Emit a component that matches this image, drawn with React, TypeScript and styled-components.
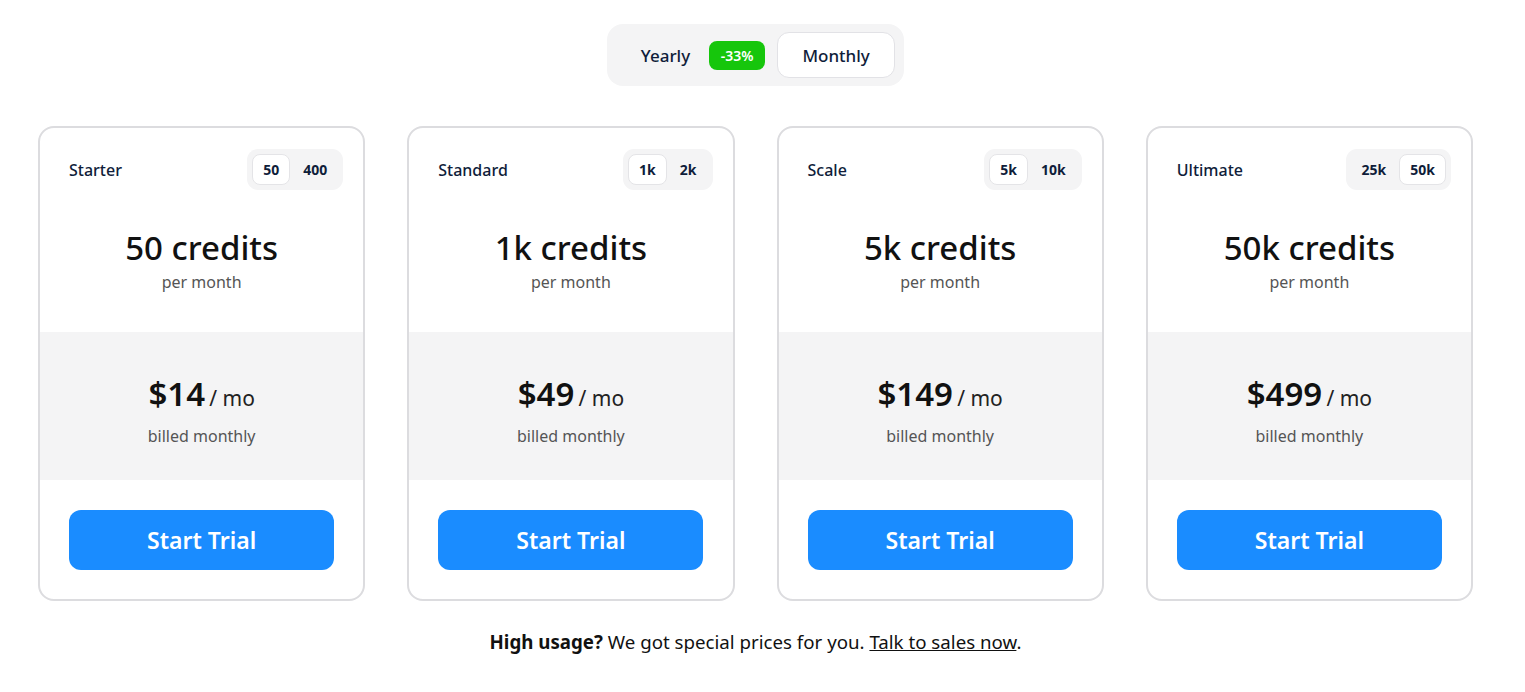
import styled, { createGlobalStyle } from "styled-components"

const Global = createGlobalStyle`
    * { box-sizing: border-box; }
    body {
        margin: 0;
        background: #fff;
        font-family: "Noto Sans", "Open Sans", sans-serif;
        color: #111;
    }
`
const Page = styled.div`
    width: 1435px;
    margin-left: 38px;
    padding-top: 24px;
    display: flex;
    flex-direction: column;
    align-items: center;
`
const Toggle = styled.div`
    display: flex;
    align-items: center;
    height: 62px;
    padding: 0 9px 0 34px;
    background: #f4f4f5;
    border-radius: 16px;
`
const ToggleLabel = styled.span`
    font-size: 17px;
    font-weight: 500;
    color: #0f1d3a;
`
const Badge = styled.span`
    margin-left: 19px;
    background: #16c60c;
    color: #fff;
    font-size: 14px;
    font-weight: 600;
    height: 29px;
    width: 56px;
    border-radius: 8px;
    display: flex;
    align-items: center;
    justify-content: center;
`
const ToggleButton = styled.button`
    margin-left: 12px;
    height: 46px;
    width: 118px;
    background: #fff;
    border: 1px solid #e2e2e6;
    border-radius: 12px;
    font-family: inherit;
    font-size: 17px;
    font-weight: 500;
    color: #0f1d3a;
`
const Cards = styled.div`
    margin-top: 40px;
    width: 100%;
    display: grid;
    grid-template-columns: repeat(4, 1fr);
    gap: 42px;
`
const Card = styled.div`
    height: 475px;
    border: 2px solid #dcdcdf;
    border-radius: 16px;
    overflow: hidden;
    display: flex;
    flex-direction: column;
`
const CardHead = styled.div`
    flex: none;
    display: flex;
    align-items: center;
    justify-content: space-between;
    padding: 21px 20px 0 29px;
`
const PlanName = styled.span`
    font-size: 16px;
    font-weight: 500;
    color: #0f1d3a;
`
const Pill = styled.div`
    display: flex;
    align-items: center;
    gap: 2px;
    height: 41px;
    padding: 0 5px;
    background: #f4f4f5;
    border-radius: 11px;
`
const PillOption = styled.span<{ active?: boolean }>`
    height: 31px;
    padding: 0 10px;
    display: flex;
    align-items: center;
    font-size: 14px;
    font-weight: 700;
    color: #0f1d3a;
    border-radius: 8px;
    background: ${({ active }) => (active ? "#fff" : "transparent")};
    border: 1px solid ${({ active }) => (active ? "#e4e4e7" : "transparent")};
`
const Credits = styled.div`
    flex: none;
    padding-top: 38px;
    height: 142px;
    text-align: center;
`
const Big = styled.div`
    font-size: 33px;
    font-weight: 500;
    line-height: 40px;
    color: #111;
`
const Sub = styled.div`
    font-size: 16px;
    color: #555;
    line-height: 26px;
    margin-top: 1px;
`
const PriceBox = styled.div`
    flex: none;
    height: 148px;
    background: #f4f4f5;
    padding-top: 40px;
    text-align: center;
`
const Price = styled.div`
    line-height: 44px;
`
const Amount = styled.span`
    font-size: 33px;
    font-weight: 600;
    color: #111;
`
const Per = styled.span`
    font-size: 21px;
    color: #222;
`
const Footer = styled.div`
    display: flex;
    justify-content: center;
    padding: 30px 0 0;
`
const TrialButton = styled.button`
    width: 265px;
    height: 60px;
    border: none;
    border-radius: 12px;
    background: #1a8cff;
    color: #fff;
    font-family: inherit;
    font-size: 23px;
    font-weight: 600;
`
const Note = styled.p`
    margin: 28px 0 0;
    font-size: 18.7px;
    color: #111;
    a {
        color: #111;
        text-decoration: underline;
    }
`

const plans = [
    { name: "Starter", options: ["50", "400"], active: 0, credits: "50", price: "$14" },
    { name: "Standard", options: ["1k", "2k"], active: 0, credits: "1k", price: "$49" },
    { name: "Scale", options: ["5k", "10k"], active: 0, credits: "5k", price: "$149" },
    { name: "Ultimate", options: ["25k", "50k"], active: 1, credits: "50k", price: "$499" },
]

function App() {
    return (
        <>
            <Global />
            <Page>
                <Toggle>
                    <ToggleLabel>Yearly</ToggleLabel>
                    <Badge>-33%</Badge>
                    <ToggleButton>Monthly</ToggleButton>
                </Toggle>
                <Cards>
                    {plans.map((p) => (
                        <Card key={p.name}>
                            <CardHead>
                                <PlanName>{p.name}</PlanName>
                                <Pill>
                                    {p.options.map((o, i) => (
                                        <PillOption key={o} active={i === p.active}>{o}</PillOption>
                                    ))}
                                </Pill>
                            </CardHead>
                            <Credits>
                                <Big>{p.credits} credits</Big>
                                <Sub>per month</Sub>
                            </Credits>
                            <PriceBox>
                                <Price>
                                    <Amount>{p.price}</Amount> <Per>/ mo</Per>
                                </Price>
                                <Sub>billed monthly</Sub>
                            </PriceBox>
                            <Footer>
                                <TrialButton>Start Trial</TrialButton>
                            </Footer>
                        </Card>
                    ))}
                </Cards>
                <Note>
                    <b>High usage?</b> We got special prices for you. <a href="#">Talk to sales now</a>.
                </Note>
            </Page>
        </>
    )
}
export default App
